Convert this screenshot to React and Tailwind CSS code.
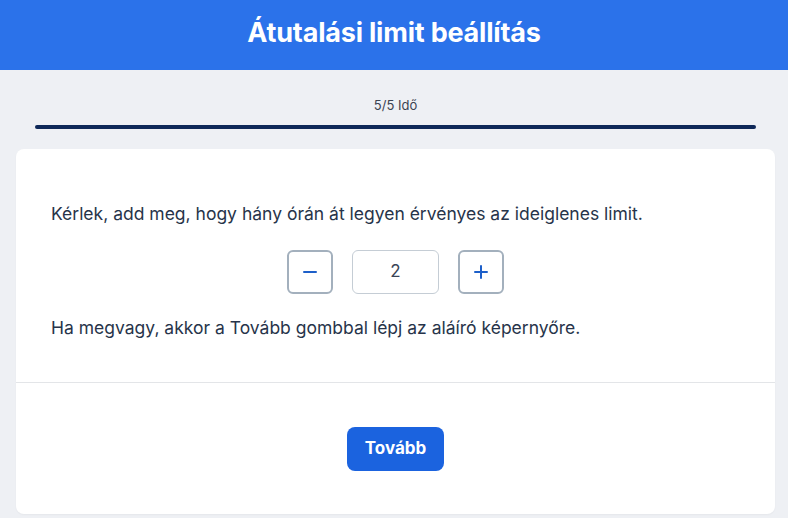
import { useState } from 'react'

export default function App() {
  const [ora, setOra] = useState(2)

  return (
    <div className="min-h-[518px] bg-[#eef0f4] font-['Inter',sans-serif] text-[#27344a]">
      <header className="h-[70px] pb-[4px] bg-[#2b72ea] flex items-center justify-center">
        <h1 className="text-[27px] font-bold text-white tracking-[-0.2px]">Átutalási limit beállítás</h1>
      </header>

      {/* lépésjelző */}
      <div className="ml-[35px] mr-[32px] pt-[26px]">
        <p className="text-[13px] leading-[18px] text-center text-[#3b4352]">5/5 Idő</p>
        <div className="mt-[11px] h-[4px] rounded-full bg-[#0e2858]"></div>
      </div>

      <div className="ml-4 mr-[13px] mt-[20px] bg-white rounded-lg shadow-[0_1px_2px_rgba(0,0,0,0.04)]">
        <section className="px-[35px] pt-[52px] pb-[41px] border-b border-[#e3e5e8]">
          <p className="text-[17.5px] leading-[26px]">Kérlek, add meg, hogy hány órán át legyen érvényes az ideiglenes limit.</p>
          <div className="mt-[23px] flex items-center justify-center gap-[19px]">
            <StepButton onClick={() => setOra(o => Math.max(1, o - 1))}>
              <svg width="16" height="16" viewBox="0 0 16 16"><path d="M2 8h12" stroke="#1d5fc9" strokeWidth="2" strokeLinecap="round" /></svg>
            </StepButton>
            <div className="w-[87px] h-[44px] rounded-md border border-[#c5cdd5] flex items-center justify-center text-[17px] text-[#3a4456]">{ora}</div>
            <StepButton onClick={() => setOra(o => o + 1)}>
              <svg width="16" height="16" viewBox="0 0 16 16"><path d="M2 8h12M8 2v12" stroke="#1d5fc9" strokeWidth="2" strokeLinecap="round" /></svg>
            </StepButton>
          </div>
          <p className="mt-[21px] text-[17.5px] leading-[26px]">Ha megvagy, akkor a Tovább gombbal lépj az aláíró képernyőre.</p>
        </section>
        <div className="pt-[44px] pb-[43px] flex justify-center">
          <button className="w-[97px] h-[44px] rounded-lg bg-[#1b63df] text-white font-bold text-[17px]">Tovább</button>
        </div>
      </div>
    </div>
  )
}

function StepButton({ children, onClick }) {
  return (
    <button onClick={onClick} className="w-[46px] h-[44px] rounded-md border-2 border-[#a3b0bd] flex items-center justify-center">
      {children}
    </button>
  )
}
